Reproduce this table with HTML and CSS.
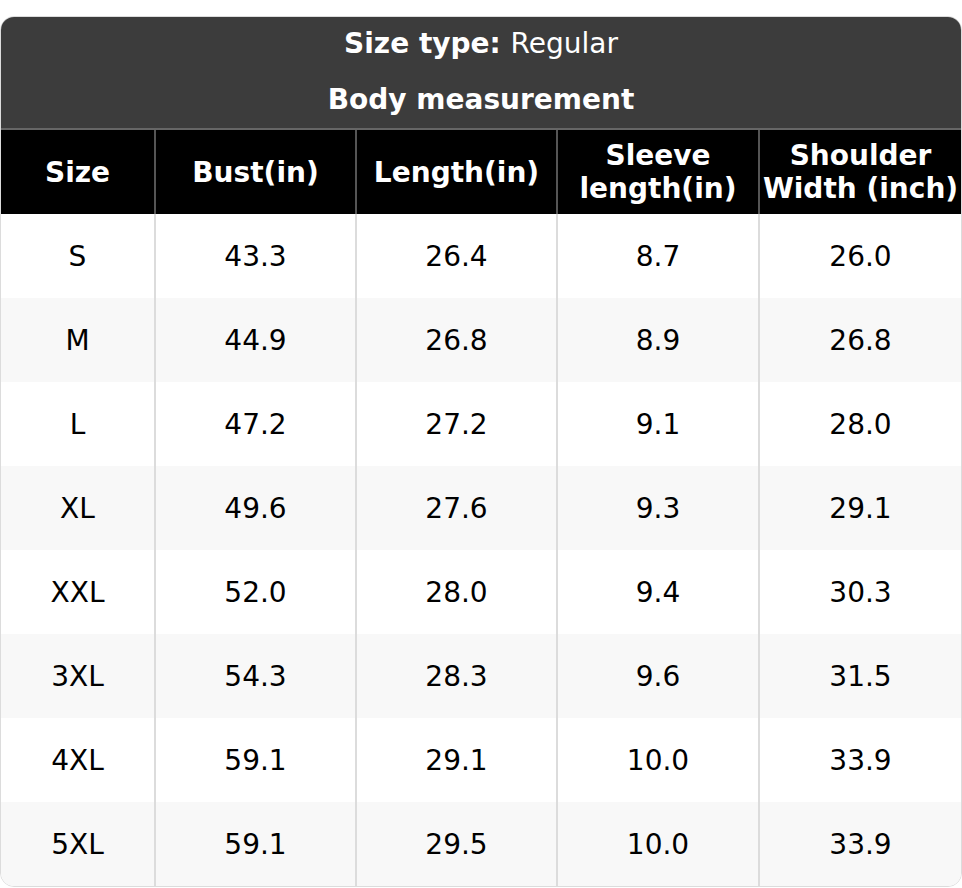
FILE: index.html
```html
<!DOCTYPE html>
<html>
<head>
<meta charset="utf-8">
<link rel="stylesheet" href="styles.css">
</head>
<body>
<div class="wrap">
<table class="chart">
<colgroup>
<col class="w1"><col class="w2"><col class="w2"><col class="w3"><col>
</colgroup>
<thead>
<tr class="top"><th colspan="5" class="title first"><b>Size type:</b> <span class="reg">Regular</span></th></tr>
<tr class="top"><th colspan="5" class="title sub">Body measurement</th></tr>
<tr class="cols">
<th class="c1">Size</th><th>Bust(in)</th><th>Length(in)</th><th>Sleeve<br>length(in)</th><th>Shoulder<br>Width (inch)</th>
</tr>
</thead>
<tbody>
<tr><td>S</td><td>43.3</td><td>26.4</td><td>8.7</td><td>26.0</td></tr>
<tr><td>M</td><td>44.9</td><td>26.8</td><td>8.9</td><td>26.8</td></tr>
<tr><td>L</td><td>47.2</td><td>27.2</td><td>9.1</td><td>28.0</td></tr>
<tr><td>XL</td><td>49.6</td><td>27.6</td><td>9.3</td><td>29.1</td></tr>
<tr><td>XXL</td><td>52.0</td><td>28.0</td><td>9.4</td><td>30.3</td></tr>
<tr><td>3XL</td><td>54.3</td><td>28.3</td><td>9.6</td><td>31.5</td></tr>
<tr><td>4XL</td><td>59.1</td><td>29.1</td><td>10.0</td><td>33.9</td></tr>
<tr><td>5XL</td><td>59.1</td><td>29.5</td><td>10.0</td><td>33.9</td></tr>
</tbody>
</table>
</div>
</body>
</html>
```
FILE: styles.css
```css
html, body { margin: 0; padding: 0; background: #fff; }
body { font-family: "DejaVu Sans", sans-serif; }
.wrap { padding-top: 16px; }
.chart {
  width: 962px;
  border-collapse: separate;
  border-spacing: 0;
  border: 1px solid #dcdcdc;
  border-radius: 14px;
  overflow: hidden;
  table-layout: fixed;
  box-sizing: border-box;
}
.w1 { width: 153px; }
.w2 { width: 201px; }
.w3 { width: 202px; }
.chart th, .chart td { text-align: center; padding: 0; }
.top th {
  background: #3c3c3c;
  color: #fff;
  font-size: 28px;
  height: 54px;
  padding-bottom: 2px;
}
.top th.first { height: 53px; }
.title { font-weight: bold; }
.title .reg { font-weight: normal; }
.sub { border-bottom: 2px solid #666; }
.cols th {
  background: #000;
  color: #fff;
  font-size: 28px;
  font-weight: bold;
  line-height: 33px;
  height: 84px;
  border-left: 2px solid #555;
}
.cols th.c1 { border-left: none; }
tbody td {
  font-size: 28px;
  color: #000;
  height: 84px;
  border-left: 2px solid #dcdcdc;
}
tbody td:first-child { border-left: none; }
tbody tr:nth-child(even) td { background: #f8f8f8; }
```
